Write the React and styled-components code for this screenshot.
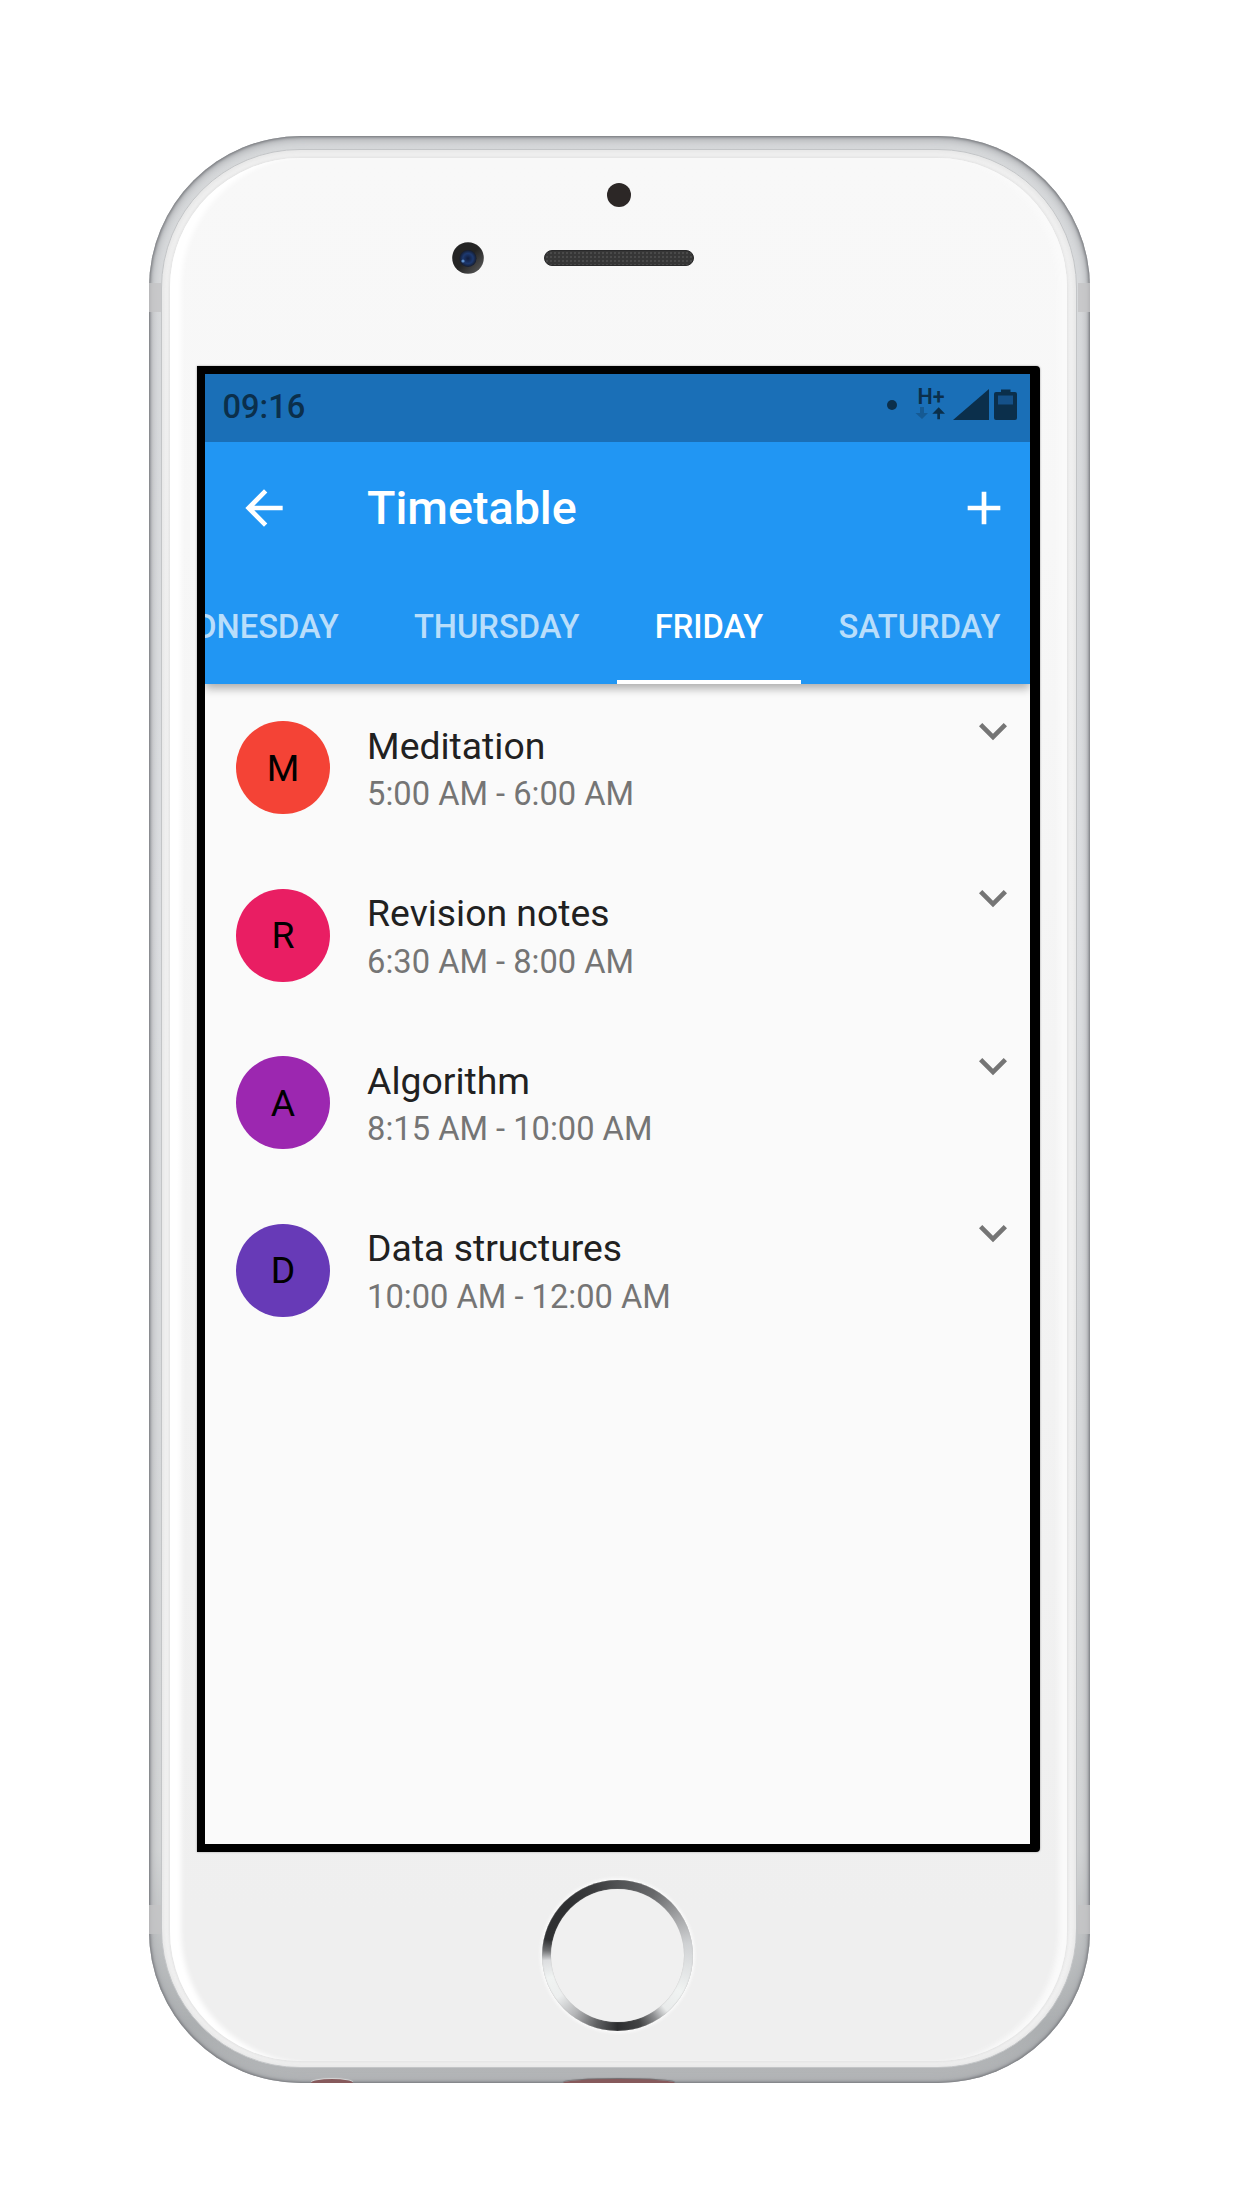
import React from 'react';
import styled, { createGlobalStyle } from 'styled-components';

const GlobalStyle = createGlobalStyle`
  * { box-sizing: border-box; }
  body { margin: 0; background: #fff; font-family: Roboto, "Liberation Sans", sans-serif; }
`;

const Page = styled.main`
  width: 1242px;
  height: 2208px;
  padding: 136px 152px 125px 149px;
  overflow: hidden;
  background: #fff;
`;

const Rim = styled.div`
  position: relative;
  width: 941px;
  height: 1947px;
  padding: 13px 13px 15px 12px;
  border-radius: 152px;
  background: linear-gradient(180deg, #d6d8da 0%, #dcdee1 40%, #d3d5d6 88%, #acafb1 97%, #b4b6b8 100%);
  box-shadow: inset 0 0 3px 1px #737579, inset 0 1px 9px 2px #a2a4a8;
`;

const Antenna = styled.i`
  position: absolute;
  ${(p) => p.$side}: 0;
  top: ${(p) => p.$top}px;
  width: 12px;
  height: 29px;
  background: rgba(196, 196, 198, 0.8);
`;

const Port = styled.i`
  position: absolute;
  bottom: 0;
  left: ${(p) => p.$left}px;
  width: ${(p) => p.$width}px;
  height: 4px;
  border-radius: 50% 50% 0 0 / 100% 100% 0 0;
  background: #865a5c;
  box-shadow: 0 -1px 1px ${(p) => p.$edge};
`;

const Lip = styled.div`
  height: 100%;
  padding: 8px 9px 6px 8px;
  border: 1px solid #c3c5c7;
  border-radius: 139px;
  background: linear-gradient(180deg, #f1f1f1, #f3f3f3);
  box-shadow: inset 0 0 6px 1px #e2e2e2;
`;

const Face = styled.div`
  display: flex;
  flex-direction: column;
  height: 100%;
  padding-left: 27px;
  border-radius: 130px;
  background: linear-gradient(180deg, #f8f8f8 0%, #f7f7f7 20%, #efefef 92%, #efefef 100%);
  box-shadow: inset 14px 0 5px -3px #fff, inset -11px 0 5px -3px #fafafa, 0 0 3px 1px #e0e0e0;
`;

const Brow = styled.div`
  display: grid;
  grid-template-columns: 92px 1fr;
  grid-template-rows: 24px 32px;
  row-gap: 35px;
  width: 497px;
  height: 208px;
  padding-top: 25px;
  margin-left: 255px;
`;

const Sensor = styled.i`
  grid-column: 2;
  justify-self: start;
  width: 24px;
  height: 24px;
  margin-left: 63px;
  border-radius: 50%;
  background: #2c2726;
`;

const Speaker = styled.i`
  align-self: center;
  width: 150px;
  height: 16px;
  border: 1px solid #29292a;
  border-radius: 8px;
  background:
    radial-gradient(circle, #4a4a4a 0.7px, transparent 1.1px) 0 0 / 4px 4px,
    #363636;
`;

const Display = styled.section`
  display: flex;
  flex-direction: column;
  flex: none;
  width: 843px;
  height: 1486px;
  border: solid #000;
  border-width: 8px 10px 8px 8px;
  border-radius: 0 4px 4px 0;
  background: #fafafa;
  box-shadow: 0 0 2px #8d8d8d;
`;

const StatusBar = styled.div`
  display: flex;
  align-items: center;
  justify-content: space-between;
  height: 68px;
  padding: 0 13.5px 0 17.5px;
  background: #1a6fb7;
  color: #0b2f4b;
`;

const Clock = styled.span`
  margin-top: -2px;
  font-size: 32.67px;
  font-weight: 500;
  line-height: 64px;
`;

const StatusIcons = styled.div`
  display: flex;
  align-items: flex-end;
  height: 36px;
  margin-top: -13px;
`;

const Dot = styled.i`
  width: 10px;
  height: 10px;
  margin: 0 18px 10px 0;
  border-radius: 50%;
  background: currentColor;
`;

const Network = styled.div`
  display: flex;
  flex-direction: column;
  align-items: center;
  width: 30px;
  margin-right: 8px;
  font-size: 21.5px;
  font-weight: 600;
  line-height: 21px;
`;

const NetworkType = styled.span`
  padding-left: 3px;
`;

const SignalIcon = styled.svg`
  width: 36px;
  height: 31px;
  margin-right: 5px;
`;

const AppBar = styled.header`
  display: flex;
  flex-direction: column;
  flex: none;
  height: 242px;
  background: #2196f3;
  color: #fff;
  box-shadow: 0 5px 9px rgba(0, 0, 0, 0.18), 0 2px 10px rgba(0, 0, 0, 0.2);
  clip-path: inset(0 0 -30px 0);
`;

const Toolbar = styled.div`
  display: flex;
  align-items: center;
  height: 131px;
  padding: 0 18.5px 0 31.3px;
`;

const Icon = styled.svg`
  flex: none;
  width: 56px;
  height: 56px;
  fill: currentColor;
`;

const Title = styled.h1`
  flex: 1;
  margin: 0 0 0 74.7px;
  font-size: 46.67px;
  font-weight: 500;
  line-height: 56px;
`;

const Tabs = styled.nav`
  display: flex;
  justify-content: flex-end;
  height: 111px;
  margin-right: -8px;
  clip-path: inset(0 8px 0 0);
`;

const Tab = styled.div`
  display: flex;
  flex: none;
  align-items: center;
  padding: 0 37.6px;
  border-bottom: 4.67px solid ${(p) => (p.$active ? '#fff' : 'transparent')};
  color: ${(p) => (p.$active ? '#fff' : 'rgba(255, 255, 255, 0.7)')};
  font-size: 32.67px;
  font-weight: 500;
`;

const Lessons = styled.ul`
  display: flex;
  flex-direction: column;
  margin: 0;
  padding: 19px 9px 0 31.3px;
  list-style: none;
`;

const Lesson = styled.li`
  display: flex;
  height: 167.6px;
  padding-top: 18px;
`;

const Avatar = styled.span`
  display: flex;
  flex: none;
  align-items: center;
  justify-content: center;
  width: 93.3px;
  height: 93.3px;
  border-radius: 50%;
  background: ${(p) => p.$color};
  color: #000;
  font-size: 37.33px;
`;

const Details = styled.div`
  flex: 1;
  margin-left: 37.5px;
`;

const Name = styled.div`
  padding-top: 1.5px;
  color: #212121;
  font-size: 37.33px;
  line-height: 46px;
`;

const Hours = styled.div`
  padding-top: 4.5px;
  color: #757575;
  font-size: 32.67px;
  line-height: 42px;
`;

const Toggle = styled(Icon)`
  margin-top: -18.5px;
  color: #757575;
`;

const Chin = styled.div`
  padding: 28px 0 0 345px;
`;

const HomeButton = styled.div`
  width: 151px;
  height: 151px;
  padding: 9px;
  border-radius: 50%;
  background: conic-gradient(
    #505153, #67686a 30deg, #a5a6a8 58deg, #cfd1d3 80deg, #dfe1e2 98deg,
    #f0f3f2 120deg, #e9ebeb 138deg, #8e8f91 149deg, #434445 162deg, #2d2e30 180deg,
    #606163 197deg, #b4b5b7 216deg, #eceeee 235deg, #f0f3f2 252deg, #dcdddf 266deg,
    #707173 274deg, #2f3032 283deg, #2e2f31 315deg, #3c3d3f 342deg, #505153
  );
  box-shadow: 0 0 3px 2px #fafafa, inset 0 0 1px #aaa;
`;

const HomeFace = styled.div`
  height: 100%;
  border-radius: 50%;
  background: #f0f0f0;
  box-shadow: 0 0 1px #b5b5b5;
`;

const CameraLens = () => (
  <svg width="32" height="32" viewBox="0 0 32 32">
    <defs>
      <linearGradient id="barrel" x1="0" y1="0" x2="1" y2="1">
        <stop offset="0.5" stopColor="#242424" />
        <stop offset="1" stopColor="#626262" />
      </linearGradient>
      <radialGradient id="glass">
        <stop offset="0" stopColor="#101c3c" />
        <stop offset="0.6" stopColor="#1d3970" />
        <stop offset="1" stopColor="#151c2e" />
      </radialGradient>
    </defs>
    <circle cx="16" cy="16" r="15.8" fill="url(#barrel)" />
    <circle cx="16" cy="16.5" r="8.5" fill="url(#glass)" />
    <circle cx="11" cy="19" r="1.6" fill="#5e8fca" />
  </svg>
);

const DataArrows = () => (
  <svg width="30" height="13" viewBox="0 0 30 13" fill="#0b2f4b">
    <path opacity="0.32" d="M5 0h4v6h4L7 12 0.5 6H5z" />
    <path d="M22.3 12.3V6.8H17.3L23.7 0.2 30 6.8H25V12.3z" />
  </svg>
);

const tabs = ['WEDNESDAY', 'THURSDAY', 'FRIDAY', 'SATURDAY'];

const lessons = [
  { name: 'Meditation', hours: '5:00 AM - 6:00 AM', color: '#f44336' },
  { name: 'Revision notes', hours: '6:30 AM - 8:00 AM', color: '#e91e63' },
  { name: 'Algorithm', hours: '8:15 AM - 10:00 AM', color: '#9c27b0' },
  { name: 'Data structures', hours: '10:00 AM - 12:00 AM', color: '#673ab7' },
];

export default function App() {
  return (
    <Page>
      <GlobalStyle />
      <Rim>
        <Antenna $side="left" $top={147} />
        <Antenna $side="right" $top={147} />
        <Antenna $side="left" $top={1769} />
        <Antenna $side="right" $top={1769} />
        <Port $left={162} $width={42} $edge="#d6d6d6" />
        <Port $left={414} $width={112} $edge="#6f6c6e" />
        <Lip>
          <Face>
            <Brow>
              <Sensor />
              <CameraLens />
              <Speaker />
            </Brow>
            <Display>
              <StatusBar>
                <Clock>09:16</Clock>
                <StatusIcons>
                  <Dot />
                  <Network>
                    <NetworkType>H+</NetworkType>
                    <DataArrows />
                  </Network>
                  <SignalIcon viewBox="0 0 36 31">
                    <path fill="#0b2f4b" d="M0 31L36 0V31z" />
                  </SignalIcon>
                  <svg width="23" height="31" viewBox="0 0 23 31">
                    <path fill="#0b2f4b" d="M7 0.5h9.5V3H21q2 0 2 2V29q0 2-2 2H2q-2 0-2-2V5q0-2 2-2H7z" />
                    <path fill="#155189" d="M4 6.5h15V15.5H4z" />
                  </svg>
                </StatusIcons>
              </StatusBar>
              <AppBar>
                <Toolbar>
                  <Icon viewBox="0 0 24 24">
                    <path d="M20 11H7.83l5.59-5.59L12 4l-8 8 8 8 1.41-1.41L7.83 13H20v-2z" />
                  </Icon>
                  <Title>Timetable</Title>
                  <Icon viewBox="0 0 24 24">
                    <path d="M19 13h-6v6h-2v-6H5v-2h6V5h2v6h6v2z" />
                  </Icon>
                </Toolbar>
                <Tabs>
                  {tabs.map((day) => (
                    <Tab key={day} $active={day === 'FRIDAY'}>{day}</Tab>
                  ))}
                </Tabs>
              </AppBar>
              <Lessons>
                {lessons.map((lesson) => (
                  <Lesson key={lesson.name}>
                    <Avatar $color={lesson.color}>{lesson.name[0]}</Avatar>
                    <Details>
                      <Name>{lesson.name}</Name>
                      <Hours>{lesson.hours}</Hours>
                    </Details>
                    <Toggle viewBox="0 0 24 24">
                      <path d="M16.59 8.59L12 13.17 7.41 8.59 6 10l6 6 6-6z" />
                    </Toggle>
                  </Lesson>
                ))}
              </Lessons>
            </Display>
            <Chin>
              <HomeButton>
                <HomeFace />
              </HomeButton>
            </Chin>
          </Face>
        </Lip>
      </Rim>
    </Page>
  );
}
